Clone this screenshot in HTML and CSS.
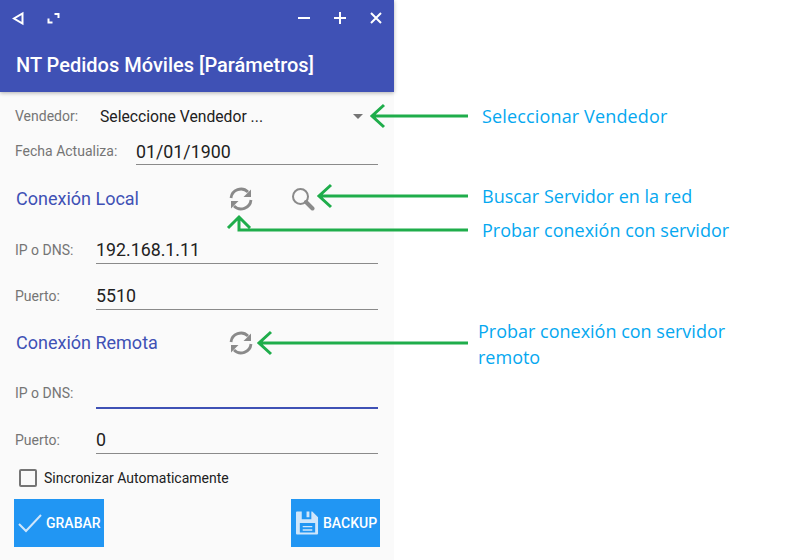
FILE: index.html
```html
<!DOCTYPE html>
<html lang="es">
<head>
<meta charset="utf-8">
<title>NT Pedidos Móviles</title>
<link rel="stylesheet" href="styles.css">
</head>
<body>
<main class="phone">
  <header class="appbar">
    <div class="status">
      <svg class="ico" viewBox="0 0 16 16"><path class="wl" d="M12.500 3.500V13.500L4 8.500Z"/></svg>
      <svg class="ico expand" viewBox="0 0 16 16"><path class="wl" d="M8.500 4h4v4M6.500 12.500h-4v-4"/></svg>
      <span class="grow"></span>
      <svg class="ico" viewBox="0 0 16 16"><path class="wl" d="M2 8h12"/></svg>
      <svg class="ico gap" viewBox="0 0 16 16"><path class="wl" d="M2 8h12M8 2v12"/></svg>
      <svg class="ico gap" viewBox="0 0 16 16"><path class="wl" d="M3 3l10 10M13 3L3 13"/></svg>
    </div>
    <h1 class="title">NT Pedidos Móviles [Parámetros]</h1>
  </header>
  <form class="form">
    <div class="row row-vendor">
      <span class="label lw-vendor">Vendedor:</span>
      <span class="select-text">Seleccione Vendedor ...</span>
      <span class="caret"></span>
    </div>
    <div class="row row-date">
      <span class="label lw-date">Fecha Actualiza:</span>
      <span class="field">01/01/1900</span>
    </div>
    <div class="section s-local">
      <h2 class="section-title">Conexión Local</h2>
      <svg class="refresh" viewBox="0 0 24 24"><path class="gs" d="M2 11A10 10 0 0 1 19 5"/><path class="gf" d="M22 2.500v7.500h-7.500z"/><path class="gs" d="M22 13A10 10 0 0 1 5 19"/><path class="gf" d="M2 21.500V14h7.500z"/></svg>
      <svg class="search" viewBox="0 0 24 24"><circle class="gs thin" cx="9.500" cy="9.500" r="7.500"/><path class="gs thick" d="M15 15l6.500 6.500"/></svg>
    </div>
    <div class="row row-ip">
      <span class="label lw-ip">IP o DNS:</span>
      <span class="field">192.168.1.11</span>
    </div>
    <div class="row row-port">
      <span class="label lw-ip">Puerto:</span>
      <span class="field">5510</span>
    </div>
    <div class="section s-remote">
      <h2 class="section-title">Conexión Remota</h2>
      <svg class="refresh" viewBox="0 0 24 24"><path class="gs" d="M2 11A10 10 0 0 1 19 5"/><path class="gf" d="M22 2.500v7.500h-7.500z"/><path class="gs" d="M22 13A10 10 0 0 1 5 19"/><path class="gf" d="M2 21.500V14h7.500z"/></svg>
    </div>
    <div class="row row-ip2">
      <span class="label lw-ip">IP o DNS:</span>
      <span class="field focused"></span>
    </div>
    <div class="row row-port2">
      <span class="label lw-ip">Puerto:</span>
      <span class="field">0</span>
    </div>
    <label class="check">
      <span class="box"></span>
      <span>Sincronizar Automaticamente</span>
    </label>
    <div class="buttons">
      <button class="btn btn-save" type="button">
        <svg class="check-ico" viewBox="0 0 24 24"><path d="M1 13l7 7L23 4"/></svg>
        GRABAR
      </button>
      <button class="btn btn-backup" type="button">
        <svg class="save-ico" viewBox="0 0 24 24"><path class="floppy" fill-rule="evenodd" d="M1 0h16l6 6v17a1 1 0 0 1-1 1H1a1 1 0 0 1-1-1V1a1 1 0 0 1 1-1zM6 0v8h10V0h-2v6h-3V0zM4 12v10h16V12zM7 15h10v1.500H7zM7 18.500h10V20H7z"/></svg>
        BACKUP
      </button>
    </div>
  </form>
</main>

<svg class="arrows" viewBox="0 0 800 560" width="800" height="560">
  <g class="arrow">
    <path d="M468 116H372M384 105l-12 11 12 11"/>
    <path d="M468 196H319M331 185l-12 11 12 11"/>
    <path d="M468 230H239V217M228 228l11-11 11 11"/>
    <path d="M468 343H259M271 332l-12 11 12 11"/>
  </g>
</svg>
<p class="note n1">Seleccionar Vendedor</p>
<p class="note n2">Buscar Servidor en la red</p>
<p class="note n3">Probar conexión con servidor</p>
<p class="note n4">Probar conexión con servidor<br>remoto</p>
</body>
</html>
```
FILE: styles.css
```css
* { box-sizing: border-box; }
html, body { margin: 0; padding: 0; background: #fff; }
body { width: 800px; height: 560px; overflow: hidden; position: relative; font-family: Roboto, sans-serif; }

.phone { width: 394px; height: 560px; background: #fafafa; display: flex; flex-direction: column; }

.appbar { height: 92px; background: #3f51b5; color: #fff; box-shadow: 0 1px 4px rgba(0,0,0,.3); flex: none; }
.status { height: 36px; display: flex; align-items: center; padding: 0 10px; }
.ico { width: 16px; height: 16px; display: block; }
.expand { margin-left: 20px; }
.gap { margin-left: 20px; }
.grow { flex: 1; }
.wl { fill: none; stroke: #fff; stroke-width: 2; }
.title { margin: 0; padding: 17px 0 0 16px; font-size: 20px; font-weight: 500; line-height: 24px; white-space: nowrap; }

.form { flex: 1; display: flex; flex-direction: column; padding: 0 16px 0 15px; min-height: 0; }
.row { display: flex; align-items: flex-end; flex: none; }
.label { font-size: 14px; line-height: 18px; color: #757575; flex: none; padding-bottom: 5px; }
.lw-vendor { width: 85px; }
.lw-date { width: 121px; }
.lw-ip { width: 81px; }
.field { flex: 1; height: 25px; line-height: 22px; font-size: 17.8px; color: #212121; border-bottom: 1px solid #8a8a8a; }
.field.focused { border-bottom: 2px solid #3f51b5; }

.row-vendor { height: 48px; align-items: center; }
.row-vendor .label { padding-bottom: 0; }
.select-text { font-size: 15.7px; color: #212121; flex: 1; }
.caret { width: 0; height: 0; border-left: 5px solid transparent; border-right: 5px solid transparent; border-top: 5px solid #757575; margin-right: 15px; }
.row-date { height: 25px; }
.row-date .field { line-height: 24px; }

.section { display: flex; align-items: center; flex: none; }
.section-title { margin: 0 0 2px; font-size: 18px; font-weight: 400; color: #3f51b5; width: 213px; padding-left: 1px; }
.s-local { height: 68px; }
.s-remote { height: 66px; }
.refresh { width: 24px; height: 24px; margin-left: 1px; }
.search { width: 24px; height: 24px; margin-left: 38px; margin-bottom: 1px; }
.gs { fill: none; stroke: #8a8a8a; stroke-width: 2.800; }
.gf { fill: #8a8a8a; }
.thin { stroke-width: 2; }
.thick { stroke-width: 4; stroke-linecap: round; }

.row-ip { height: 31px; }
.row-port { height: 46px; }
.row-ip2 { height: 33px; }
.row-ip2 .label { padding-bottom: 7px; }
.row-port2 { height: 45px; }

.check { display: flex; align-items: center; gap: 7px; font-size: 14px; color: #212121; margin: 9px 0 0 4px; height: 30px; flex: none; }
.box { width: 18px; height: 18px; border: 2px solid #757575; border-radius: 2px; flex: none; }

.buttons { display: flex; justify-content: space-between; margin: 6px -2px 0 -1px; flex: none; }
.btn { height: 48px; border: 0; padding: 0; background: #2196f3; color: #fff; font: 500 14px Roboto, sans-serif; display: flex; align-items: center; white-space: nowrap; }
.btn-save { width: 90px; padding-left: 4px; gap: 4px; }
.btn-backup { width: 89px; padding-left: 5px; gap: 4px; }
.check-ico { width: 24px; height: 24px; flex: none; }
.check-ico path { fill: none; stroke: #cfe6fb; stroke-width: 2; }
.save-ico { width: 23px; height: 24px; flex: none; }
.floppy { fill: #cfe6fb; }

.arrows { position: absolute; left: 0; top: 0; pointer-events: none; }
.arrow path { fill: none; stroke: #1fad4b; stroke-width: 3; }

.note { position: absolute; margin: 0; font-family: "Open Sans", sans-serif; font-size: 18px; line-height: 26px; color: #05a8f0; white-space: nowrap; }
.n1 { left: 482px; top: 103px; letter-spacing: .15px; }
.n2 { left: 482px; top: 183px; }
.n3 { left: 482px; top: 217px; }
.n4 { left: 478px; top: 318px; }
```
